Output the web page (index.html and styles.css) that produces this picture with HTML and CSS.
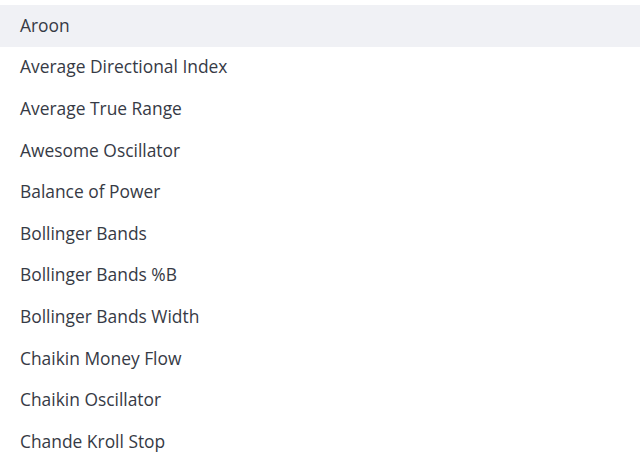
FILE: index.html
```html
<!DOCTYPE html>
<html lang="en">
<head>
    <meta charset="UTF-8">
    <title>Indicators</title>
    <link rel="stylesheet" href="styles.css">
</head>
<body>
    <ul class="list">
        <li class="item active">Aroon</li>
        <li class="item">Average Directional Index</li>
        <li class="item">Average True Range</li>
        <li class="item">Awesome Oscillator</li>
        <li class="item">Balance of Power</li>
        <li class="item">Bollinger Bands</li>
        <li class="item">Bollinger Bands %B</li>
        <li class="item">Bollinger Bands Width</li>
        <li class="item">Chaikin Money Flow</li>
        <li class="item">Chaikin Oscillator</li>
        <li class="item">Chande Kroll Stop</li>
    </ul>
</body>
</html>
```
FILE: styles.css
```css
body {
    margin: 0;
    background-color: #fff;
    font-family: "Open Sans", "Liberation Sans", sans-serif;
    overflow: hidden;
}
.list {
    list-style: none;
    margin: 0;
    padding: 5px 0 0;
}
.item {
    box-sizing: border-box;
    height: 41.6px;
    padding: 0 0 2px 20px;
    display: flex;
    align-items: center;
    font-size: 17.4px;
    color: #363a45;
}
.item.active {
    background-color: #f0f1f5;
}
```
